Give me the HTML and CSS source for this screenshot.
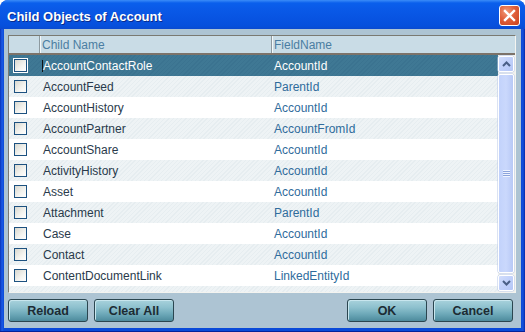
FILE: index.html
```html
<!DOCTYPE html>
<html>
<head>
<meta charset="utf-8">
<link rel="stylesheet" href="styles.css">
</head>
<body>
<div class="window">
  <div class="titlebar">
    <span class="title">Child Objects of Account</span>
    <span class="close"><svg width="13" height="13" viewBox="0 0 13 13"><path d="M2 2 L11 11 M11 2 L2 11" stroke="#fff" stroke-width="2.4" stroke-linecap="square"/></svg></span>
  </div>
  <div class="content">
    <div class="table">
      <div class="thead">
        <div class="hcell hcheck"></div>
        <div class="hcell hname">Child Name</div>
        <div class="hcell hfield">FieldName</div>
      </div>
      <div class="tbody">
        <div class="rows">
          <div class="row selected"><div class="ccheck"><span class="box"></span></div><div class="cname"><span class="caret"></span>AccountContactRole</div><div class="cfield">AccountId</div></div>
          <div class="row alt"><div class="ccheck"><span class="box"></span></div><div class="cname">AccountFeed</div><div class="cfield">ParentId</div></div>
          <div class="row"><div class="ccheck"><span class="box"></span></div><div class="cname">AccountHistory</div><div class="cfield">AccountId</div></div>
          <div class="row alt"><div class="ccheck"><span class="box"></span></div><div class="cname">AccountPartner</div><div class="cfield">AccountFromId</div></div>
          <div class="row"><div class="ccheck"><span class="box"></span></div><div class="cname">AccountShare</div><div class="cfield">AccountId</div></div>
          <div class="row alt"><div class="ccheck"><span class="box"></span></div><div class="cname">ActivityHistory</div><div class="cfield">AccountId</div></div>
          <div class="row"><div class="ccheck"><span class="box"></span></div><div class="cname">Asset</div><div class="cfield">AccountId</div></div>
          <div class="row alt"><div class="ccheck"><span class="box"></span></div><div class="cname">Attachment</div><div class="cfield">ParentId</div></div>
          <div class="row"><div class="ccheck"><span class="box"></span></div><div class="cname">Case</div><div class="cfield">AccountId</div></div>
          <div class="row alt"><div class="ccheck"><span class="box"></span></div><div class="cname">Contact</div><div class="cfield">AccountId</div></div>
          <div class="row"><div class="ccheck"><span class="box"></span></div><div class="cname">ContentDocumentLink</div><div class="cfield">LinkedEntityId</div></div>
          <div class="row alt"></div>
        </div>
        <div class="scrollbar">
          <div class="sbtn"><svg width="9" height="6" viewBox="0 0 9 6"><path d="M1 5 L4.5 1.5 L8 5" fill="none" stroke="#4a5f86" stroke-width="2"/></svg></div>
          <div class="thumb"><span class="grip"></span></div>
          <div class="sbtn"><svg width="9" height="6" viewBox="0 0 9 6"><path d="M1 1 L4.5 4.5 L8 1" fill="none" stroke="#4a5f86" stroke-width="2"/></svg></div>
        </div>
      </div>
    </div>
    <div class="buttons">
      <div class="group">
        <button class="btn">Reload</button>
        <button class="btn">Clear All</button>
      </div>
      <div class="group">
        <button class="btn">OK</button>
        <button class="btn">Cancel</button>
      </div>
    </div>
  </div>
</div>
</body>
</html>
```

FILE: styles.css
```css
* { box-sizing: border-box; }
html, body { margin: 0; padding: 0; }
body { width: 525px; height: 332px; overflow: hidden; background: #fff; font-family: "Liberation Sans", Arial, sans-serif; }

.window {
  width: 525px;
  height: 332px;
  display: flex;
  flex-direction: column;
  background: linear-gradient(to right, #0832b8 0, #1a5ae6 2px, #0a4ad8 4px, #0a4ad8 calc(100% - 4px), #1750dc calc(100% - 2px), #062aa8 100%);
  border-radius: 8px 8px 0 0;
  border-bottom: 1px solid #05229a;
}

.titlebar {
  height: 29px;
  flex: none;
  display: flex;
  align-items: center;
  justify-content: space-between;
  padding: 0 5px 0 7px;
  border-radius: 8px 8px 0 0;
  background: linear-gradient(to bottom, #3b8cf8 0, #0a5fec 3px, #0a5ae8 8px, #0854e2 18px, #0650dc 26px, #0a4ad0 29px);
}
.title {
  color: #fff;
  font-weight: bold;
  font-size: 13px;
  text-shadow: 1px 1px 0 #0a2a8a;
  margin-top: 3px;
}
.close {
  width: 21px;
  height: 21px;
  margin-top: 1px;
  border: 1px solid #fff;
  border-radius: 3px;
  background: radial-gradient(circle at 35% 30%, #f29a78 0, #e0603c 45%, #c8401c 100%);
  display: flex;
  align-items: center;
  justify-content: center;
}

.content {
  flex: 1;
  margin: 0 4px 3px 4px;
  background: #adc4d3;
  padding: 6px 5px 6px 4px;
  display: flex;
  flex-direction: column;
}

.table {
  height: 258px;
  flex: none;
  border: 1px solid;
  border-color: #7a7a72 #f4f4f0 #f4f4f0 #7a7a72;
  display: flex;
  flex-direction: column;
  background: #fff;
}

.thead {
  height: 19px;
  flex: none;
  display: flex;
  background: #c9dce6;
  border-bottom: 2px solid #7c736a;
}
.hcell {
  height: 17px;
  font-size: 12px;
  line-height: 18px;
  color: #4b7ea2;
  border-right: 1px solid #8d9aa0;
  box-shadow: inset 1px 0 0 #f4f8fa;
}
.hcheck { width: 31px; box-shadow: none; }
.hname { width: 232px; padding-left: 2px; }
.hfield { flex: 1; padding-left: 2px; border-right: none; }

.tbody {
  flex: 1;
  display: flex;
  overflow: hidden;
}
.rows {
  width: 489px;
  flex: none;
  overflow: hidden;
}
.row {
  height: 21px;
  display: flex;
  align-items: center;
  font-size: 12px;
  color: #293a4b;
  background: #fff;
}
.row.alt {
  background: repeating-linear-gradient(135deg, #eef3f5 0, #eef3f5 2px, #e6edf0 2px, #e6edf0 3px);
}
.row.selected {
  background: repeating-linear-gradient(135deg, #3f7894 0, #3f7894 2px, #3b7390 2px, #3b7390 3px);
  color: #fff;
}
.ccheck {
  width: 31px;
  flex: none;
  display: flex;
  align-items: center;
}
.box {
  width: 13px;
  height: 13px;
  margin-left: 5px;
  border: 1px solid #1c5180;
  background: linear-gradient(135deg, #d8d8d0 0, #f4f4f0 60%, #fff 100%);
}
.selected .box { box-shadow: 0 0 0 1px #fff; }
.cname {
  width: 232px;
  flex: none;
  padding-left: 3px;
  display: flex;
  align-items: center;
}
.caret {
  width: 1px;
  height: 12px;
  background: #111;
  margin-left: -1px;
}
.cfield {
  flex: 1;
  padding-left: 2px;
  color: #2f6c9c;
}
.selected .cfield { color: #fff; }

.scrollbar {
  width: 17px;
  flex: none;
  background: linear-gradient(to right, #f3f3ee 0, #fbfbf8 60%, #f0f0ea 100%);
  display: flex;
  flex-direction: column;
  padding: 1px 1px 1px 0;
  gap: 1px;
}
.sbtn {
  width: 16px;
  height: 16px;
  flex: none;
  border: 1px solid #fff;
  border-radius: 2px;
  background: linear-gradient(135deg, #d2defc 0, #c0d0fa 50%, #b4c6f6 100%);
  display: flex;
  align-items: center;
  justify-content: center;
  box-shadow: 0 0 0 0.5px #b8c8e8;
}
.thumb {
  flex: 1;
  margin: 1px 0;
  border: 1px solid #fff;
  border-radius: 2px;
  background: linear-gradient(to right, #c2d2fb 0, #cad8fc 50%, #b8c9f6 100%);
  display: flex;
  align-items: center;
  justify-content: center;
  box-shadow: 0 0 0 0.5px #b8c8e8;
}
.grip {
  width: 7px;
  height: 7px;
  background: repeating-linear-gradient(to bottom, #eef3ff 0, #eef3ff 1px, #8ca4dc 1px, #8ca4dc 2px);
}

.buttons {
  margin-top: 6px;
  display: flex;
  justify-content: space-between;
  padding-right: 3px;
}
.group { display: flex; gap: 6px; }
.btn {
  width: 80px;
  height: 23px;
  margin: 0;
  padding: 0;
  border: 1px solid #2b4650;
  border-radius: 3px;
  font-family: "Liberation Sans", Arial, sans-serif;
  font-weight: bold;
  font-size: 12.5px;
  color: #1c2b33;
  background: linear-gradient(to bottom, #a8d2dc 0, #8ec1ce 35%, #6aa6b6 70%, #4d8a9c 100%);
  box-shadow: inset 1px 1px 0 #c8e6ee;
}
```
